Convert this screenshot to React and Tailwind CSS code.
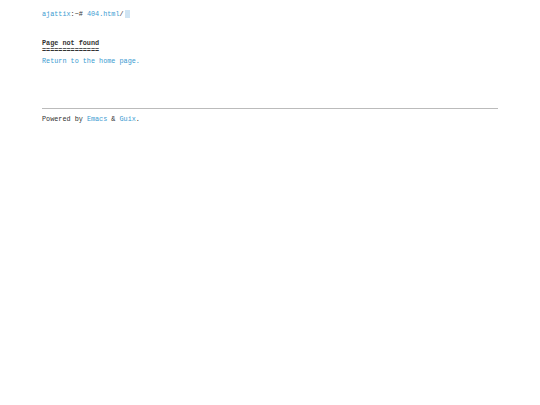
export default function App() {
  return (
    <div className="min-h-screen bg-white px-[42px] text-[6.8px] leading-[1.3] text-[#333] font-['Liberation_Mono',monospace]">
      <div className="pt-[10px] flex items-center">
        <span className="text-[#3b9bd1]">ajattix</span>
        <span>:~# </span>
        <span className="text-[#3b9bd1]">&nbsp;404.html</span>
        <span>/</span>
        <span className="inline-block w-[5px] h-[8px] bg-[#cfe4f3] ml-[1px]"></span>
      </div>
      <div className="mt-[20px] w-[456px]">
        <div className="font-bold">Page not found</div>
        <div className="font-bold -mt-[2px]">==============</div>
        <div className="mt-[3px] text-[#3b9bd1]">Return to the home page.</div>
      </div>
      <div className="mt-[42px] w-[456px] border-t border-[#bbb]"></div>
      <div className="mt-[6px]">
        Powered by <span className="text-[#3b9bd1]">Emacs</span> &amp; <span className="text-[#3b9bd1]">Guix</span>.
      </div>
    </div>
  );
}
